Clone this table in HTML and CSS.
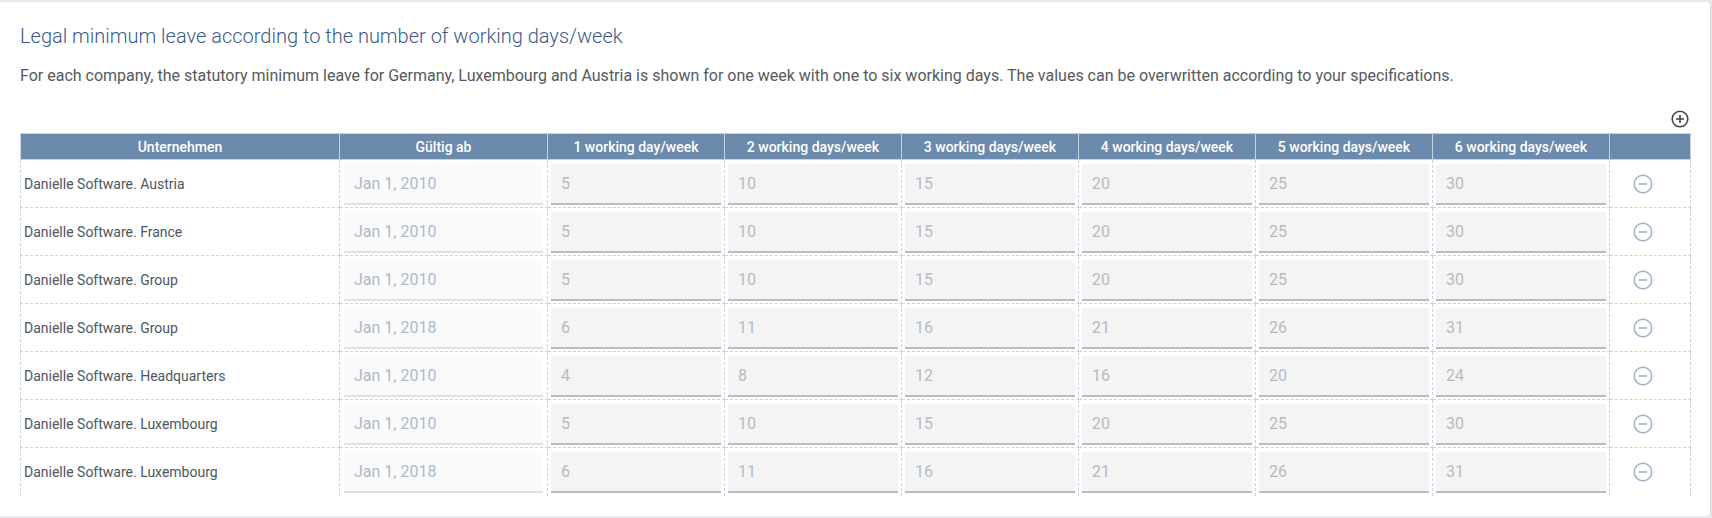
FILE: index.html
```html
<!DOCTYPE html>
<html>
<head>
<meta charset="utf-8">
<link rel="stylesheet" href="styles.css">
</head>
<body>
<div class="card">
  <h2 class="title">Legal minimum leave according to the number of working days/week</h2>
  <p class="desc">For each company, the statutory minimum leave for Germany, Luxembourg and Austria is shown for one week with one to six working days. The values can be overwritten according to your specifications.</p>
  <div class="toolbar">
    <svg class="icon-plus" width="18" height="18" viewBox="0 0 18 18"><circle cx="9" cy="9" r="7.8" fill="none" stroke="#444" stroke-width="1.6"/><path d="M9 5v8M5 9h8" stroke="#444" stroke-width="1.6"/></svg>
  </div>
  <table class="grid">
    <colgroup>
      <col class="c-company"><col class="c-date"><col class="c-num"><col class="c-num"><col class="c-num"><col class="c-num"><col class="c-num"><col class="c-num"><col class="c-act">
    </colgroup>
    <thead>
      <tr>
        <th>Unternehmen</th><th>Gültig ab</th><th>1 working day/week</th><th>2 working days/week</th><th>3 working days/week</th><th>4 working days/week</th><th>5 working days/week</th><th>6 working days/week</th><th></th>
      </tr>
    </thead>
    <tbody>
      <tr><td class="name">Danielle Software. Austria</td><td class="d"><div class="field date">Jan 1, 2010</div></td><td><div class="field num">5</div></td><td><div class="field num">10</div></td><td><div class="field num">15</div></td><td><div class="field num">20</div></td><td><div class="field num">25</div></td><td><div class="field num">30</div></td><td class="act"><svg class="icon-minus" width="20" height="20" viewBox="0 0 20 20"><circle cx="10" cy="10" r="8.8" fill="none" stroke="#9fb2cc" stroke-width="1.6"/><path d="M5.8 10h8.4" stroke="#9fb2cc" stroke-width="1.6"/></svg></td></tr>
      <tr><td class="name">Danielle Software. France</td><td class="d"><div class="field date">Jan 1, 2010</div></td><td><div class="field num">5</div></td><td><div class="field num">10</div></td><td><div class="field num">15</div></td><td><div class="field num">20</div></td><td><div class="field num">25</div></td><td><div class="field num">30</div></td><td class="act"><svg class="icon-minus" width="20" height="20" viewBox="0 0 20 20"><circle cx="10" cy="10" r="8.8" fill="none" stroke="#9fb2cc" stroke-width="1.6"/><path d="M5.8 10h8.4" stroke="#9fb2cc" stroke-width="1.6"/></svg></td></tr>
      <tr><td class="name">Danielle Software. Group</td><td class="d"><div class="field date">Jan 1, 2010</div></td><td><div class="field num">5</div></td><td><div class="field num">10</div></td><td><div class="field num">15</div></td><td><div class="field num">20</div></td><td><div class="field num">25</div></td><td><div class="field num">30</div></td><td class="act"><svg class="icon-minus" width="20" height="20" viewBox="0 0 20 20"><circle cx="10" cy="10" r="8.8" fill="none" stroke="#9fb2cc" stroke-width="1.6"/><path d="M5.8 10h8.4" stroke="#9fb2cc" stroke-width="1.6"/></svg></td></tr>
      <tr><td class="name">Danielle Software. Group</td><td class="d"><div class="field date">Jan 1, 2018</div></td><td><div class="field num">6</div></td><td><div class="field num">11</div></td><td><div class="field num">16</div></td><td><div class="field num">21</div></td><td><div class="field num">26</div></td><td><div class="field num">31</div></td><td class="act"><svg class="icon-minus" width="20" height="20" viewBox="0 0 20 20"><circle cx="10" cy="10" r="8.8" fill="none" stroke="#9fb2cc" stroke-width="1.6"/><path d="M5.8 10h8.4" stroke="#9fb2cc" stroke-width="1.6"/></svg></td></tr>
      <tr><td class="name">Danielle Software. Headquarters</td><td class="d"><div class="field date">Jan 1, 2010</div></td><td><div class="field num">4</div></td><td><div class="field num">8</div></td><td><div class="field num">12</div></td><td><div class="field num">16</div></td><td><div class="field num">20</div></td><td><div class="field num">24</div></td><td class="act"><svg class="icon-minus" width="20" height="20" viewBox="0 0 20 20"><circle cx="10" cy="10" r="8.8" fill="none" stroke="#9fb2cc" stroke-width="1.6"/><path d="M5.8 10h8.4" stroke="#9fb2cc" stroke-width="1.6"/></svg></td></tr>
      <tr><td class="name">Danielle Software. Luxembourg</td><td class="d"><div class="field date">Jan 1, 2010</div></td><td><div class="field num">5</div></td><td><div class="field num">10</div></td><td><div class="field num">15</div></td><td><div class="field num">20</div></td><td><div class="field num">25</div></td><td><div class="field num">30</div></td><td class="act"><svg class="icon-minus" width="20" height="20" viewBox="0 0 20 20"><circle cx="10" cy="10" r="8.8" fill="none" stroke="#9fb2cc" stroke-width="1.6"/><path d="M5.8 10h8.4" stroke="#9fb2cc" stroke-width="1.6"/></svg></td></tr>
      <tr class="last"><td class="name">Danielle Software. Luxembourg</td><td class="d"><div class="field date">Jan 1, 2018</div></td><td><div class="field num">6</div></td><td><div class="field num">11</div></td><td><div class="field num">16</div></td><td><div class="field num">21</div></td><td><div class="field num">26</div></td><td><div class="field num">31</div></td><td class="act"><svg class="icon-minus" width="20" height="20" viewBox="0 0 20 20"><circle cx="10" cy="10" r="8.8" fill="none" stroke="#9fb2cc" stroke-width="1.6"/><path d="M5.8 10h8.4" stroke="#9fb2cc" stroke-width="1.6"/></svg></td></tr>
    </tbody>
  </table>
</div>
</body>
</html>
```
FILE: styles.css
```css
html, body {
  margin: 0;
  padding: 0;
  background: #e9e9f0;
  font-family: Roboto, "Liberation Sans", sans-serif;
}
.card {
  box-sizing: border-box;
  width: 1710px;
  height: 514px;
  margin: 2px 0 0 0;
  background: #fff;
  border-radius: 0 3px 3px 0;
  box-shadow: 0 1px 3px rgba(0, 0, 0, 0.18);
  padding: 22px 21px 0 20px;
}
.title {
  margin: 0;
  font-size: 20px;
  line-height: 24px;
  font-weight: 300;
  color: #3a5a8c;
}
.desc {
  margin: 18px 0 0 0;
  font-size: 16px;
  line-height: 20px;
  color: #555a60;
}
.toolbar {
  margin-top: 24px;
  height: 18px;
  display: flex;
  justify-content: flex-end;
  margin-bottom: 5px;
}
.icon-plus { display: block; }
.grid {
  width: 1669px;
  table-layout: fixed;
  border-collapse: collapse;
}
.c-company { width: 319px; }
.c-date { width: 208px; }
.c-num { width: 177px; }
.c-act { width: 81px; }
.grid th {
  height: 26px;
  padding: 0;
  background: #6c8aab;
  color: #fff;
  font-size: 14px;
  font-weight: 500;
  text-align: center;
  border: 1px solid #c4d4e3;
  box-sizing: border-box;
}
.grid td {
  height: 48px;
  box-sizing: border-box;
  padding: 3px 3px 2px 3px;
  border: 1px dashed #c5d5e3;
  vertical-align: middle;
}
.grid tr.last td {
  border-bottom-color: transparent;
}
.grid td.name {
  padding-left: 3px;
  font-size: 14px;
  color: #4b5763;
}
.grid td.d {
  padding-left: 4px;
  padding-right: 4px;
}
.grid td.act {
  text-align: left;
  padding: 0 0 0 23px;
}
.icon-minus {
  display: block;
}
.field {
  box-sizing: border-box;
  height: 41px;
  line-height: 39px;
  padding-left: 10px;
  font-size: 16px;
}
.field.date {
  background: #fafafa;
  border-bottom: 2px solid #e0e0e0;
  color: #a9bad0;
}
.field.num {
  background: #f4f4f4;
  border-bottom: 2px solid #b5bec8;
  color: #b3bcc5;
}
```
